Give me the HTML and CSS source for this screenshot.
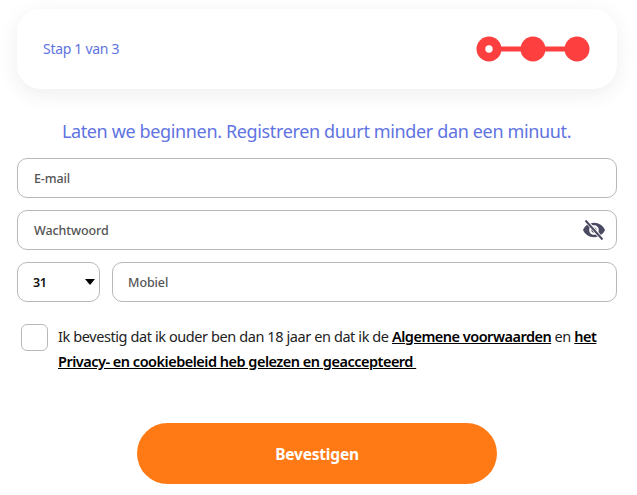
FILE: index.html
```html
<!DOCTYPE html>
<html lang="nl">
<head>
<meta charset="utf-8">
<title>Registreren</title>
<link rel="stylesheet" href="styles.css">
</head>
<body>
<main class="page">
  <section class="step-card">
    <span class="step-label">Stap 1 van 3</span>
    <svg class="stepper" width="114" height="26" viewBox="0 0 114 26" aria-hidden="true">
      <rect x="10" y="10.5" width="94" height="5" fill="#fd3f3f"/>
      <circle cx="13" cy="13" r="12.5" fill="#fd3f3f"/>
      <circle cx="13" cy="13" r="3.7" fill="#fff"/>
      <circle cx="57" cy="13" r="12.5" fill="#fd3f3f"/>
      <circle cx="101" cy="13" r="12.5" fill="#fd3f3f"/>
    </svg>
  </section>
  <h1 class="intro">Laten we beginnen. Registreren duurt minder dan een minuut.</h1>
  <form class="form">
    <div class="field"><span class="placeholder">E-mail</span></div>
    <div class="field">
      <span class="placeholder">Wachtwoord</span>
      <svg class="eye" width="24" height="24" viewBox="0 0 24 24" aria-hidden="true">
        <path fill="#4a4a62" d="M12 4.8c-5 0-9.2 3-11 7.2 1.8 4.200 6 7.200 11 7.200s9.200-3 11-7.200c-1.800-4.200-6-7.200-11-7.200zm0 12c-2.700 0-4.800-2.100-4.800-4.800S9.300 7.200 12 7.200s4.800 2.100 4.800 4.800-2.100 4.800-4.800 4.800zm0-7.400a2.600 2.600 0 1 0 0 5.200 2.600 2.600 0 0 0 0-5.200z"/>
        <path d="M4 2.500 20.500 21.500" stroke="#fff" stroke-width="3.600"/>
        <path d="M3.500 2.500 20.500 21.500" stroke="#4a4a62" stroke-width="2"/>
      </svg>
    </div>
    <div class="phone-row">
      <div class="field code"><span class="code-value">31</span><span class="caret"></span></div>
      <div class="field mobile"><span class="placeholder">Mobiel</span></div>
    </div>
    <div class="consent">
      <span class="checkbox"></span>
      <p class="consent-text">Ik bevestig dat ik ouder ben dan 18 jaar en dat ik de <a href="#">Algemene voorwaarden</a> en <a href="#">het Privacy- en cookiebeleid heb gelezen en geaccepteerd&nbsp;</a></p>
    </div>
    <button class="submit" type="button">Bevestigen</button>
  </form>
</main>
</body>
</html>
```
FILE: styles.css
```css
* { box-sizing: border-box; }
html, body { margin: 0; background: #fff; }
body { font-family: "Noto Sans", "Open Sans", sans-serif; overflow: hidden; }
.page { width: 637px; height: 495px; padding: 9px 20px 0 17px; }
.step-card {
  height: 80px;
  border-radius: 24px;
  background: #fff;
  box-shadow: 0 5px 22px rgba(0, 0, 0, 0.07);
  display: flex;
  align-items: center;
  justify-content: space-between;
  padding: 0 27px 0 26px;
}
.step-label { font-size: 14px; line-height: 18px; color: #5f73e2; letter-spacing: -0.3px; }
.stepper { display: block; margin-top: -1px; }
.intro {
  margin: 30px 1px 0 0;
  height: 24px;
  font-size: 18px;
  line-height: 24px;
  font-weight: 400;
  text-align: center;
  color: #5f73e2;
  letter-spacing: -0.36px;
}
.form { margin-top: 15px; display: flex; flex-direction: column; gap: 12px; }
.field {
  height: 40px;
  border: 1px solid #b8b8b8;
  border-radius: 10px;
  background: #fff;
  display: flex;
  align-items: center;
  justify-content: space-between;
  padding: 0 10px 0 16px;
}
.placeholder { font-size: 12.5px; font-weight: 500; color: #555; letter-spacing: -0.1px; }
.eye { display: block; }
.phone-row { display: flex; gap: 12px; }
.code { width: 83px; flex: none; padding: 0 4px 0 15px; }
.code-value { font-size: 12.5px; font-weight: 600; color: #111; letter-spacing: -0.4px; }
.caret {
  width: 0; height: 0;
  border-left: 5.500px solid transparent;
  border-right: 5.500px solid transparent;
  border-top: 6px solid #000;
}
.mobile { flex: 1; padding-left: 15px; }
.consent { display: flex; gap: 10px; margin: 10px 0 0 4px; align-items: flex-start; }
.checkbox {
  flex: none; width: 27px; height: 27px;
  border: 1px solid #b8b8b8; border-radius: 6px; background: #fff;
}
.consent-text {
  margin: 0;
  font-size: 14.5px;
  line-height: 25px;
  color: #222;
  letter-spacing: -0.41px;
}
.consent-text a { color: #000; font-weight: 600; text-decoration: underline; letter-spacing: -0.5px; }
.submit {
  align-self: center;
  width: 360px;
  height: 61px;
  margin-top: 37px;
  border: 0;
  border-radius: 31px;
  background: #ff7a14;
  color: #fff;
  font: 700 15.500px "Noto Sans", sans-serif;
  letter-spacing: -0.2px;
}
```
